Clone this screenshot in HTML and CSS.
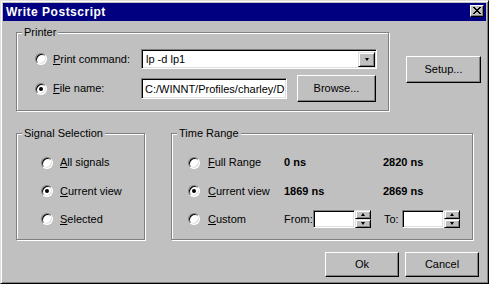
FILE: index.html
```html
<!DOCTYPE html>
<html>
<head>
<meta charset="utf-8">
<title>Write Postscript</title>
<link rel="stylesheet" href="styles.css">
</head>
<body>
<div class="window">
  <div class="titlebar">
    <span class="title">Write Postscript</span>
    <span class="close">
      <svg width="8" height="7" viewBox="0 0 8 7" shape-rendering="crispEdges"><path d="M0 0h2v1h1v1h2v-1h1v-1h2v1h-1v1h-1v1h-1v1h1v1h1v1h1v1h-2v-1h-1v-1h-2v1h-1v1h-2v-1h1v-1h1v-1h1v-1h-1v-1h-1v-1h-1z" fill="#000"/></svg>
    </span>
  </div>
  <div class="content">
    <div class="toprow">
      <div class="group printer">
        <div class="legend">Printer</div>
        <div class="prow r1">
          <span class="radio"></span>
          <span class="plabel"><u>P</u>rint command:</span>
          <div class="combo">
            <span class="ctext">lp -d lp1</span>
            <span class="dropbtn"><i class="tri-down"></i></span>
          </div>
        </div>
        <div class="prow r2">
          <span class="radio on"></span>
          <span class="plabel"><u>F</u>ile name:</span>
          <div class="field file">C:/WINNT/Profiles/charley/D</div>
          <button class="btn browse">Browse...</button>
        </div>
      </div>
      <button class="btn setup">Setup...</button>
    </div>

    <div class="midrow">
      <div class="group signal">
        <div class="legend">Signal Selection</div>
        <div class="srow first"><span class="radio"></span><span class="slabel"><u>A</u>ll signals</span></div>
        <div class="srow"><span class="radio on"></span><span class="slabel"><u>C</u>urrent view</span></div>
        <div class="srow"><span class="radio"></span><span class="slabel"><u>S</u>elected</span></div>
      </div>
      <div class="group timerange">
        <div class="legend">Time Range</div>
        <div class="trow first">
          <span class="radio"></span><span class="tlabel"><u>F</u>ull Range</span>
          <span class="val">0 ns</span><span class="val">2820 ns</span>
        </div>
        <div class="trow">
          <span class="radio on"></span><span class="tlabel"><u>C</u>urrent view</span>
          <span class="val">1869 ns</span><span class="val">2869 ns</span>
        </div>
        <div class="trow">
          <span class="radio"></span><span class="tlabel"><u>C</u>ustom</span>
          <span class="from">From:</span>
          <div class="field spinfield"></div>
          <div class="spin"><span class="sbtn"><i class="tri-up"></i></span><span class="sbtn"><i class="tri-dn"></i></span></div>
          <span class="to">To:</span>
          <div class="field spinfield"></div>
          <div class="spin"><span class="sbtn"><i class="tri-up"></i></span><span class="sbtn"><i class="tri-dn"></i></span></div>
        </div>
      </div>
    </div>

    <div class="botrow">
      <button class="btn ok">Ok</button>
      <button class="btn cancel">Cancel</button>
    </div>
  </div>
</div>
</body>
</html>
```
FILE: styles.css
```css
* { box-sizing: border-box; }
html, body { margin: 0; padding: 0; background: #c0c0c0; }
body {
  font-family: "Liberation Sans", Arial, sans-serif;
  font-size: 11px;
  line-height: 13px;
  color: #000;
}
.window {
  width: 489px;
  height: 284px;
  background: #c0c0c0;
  border: 1px solid;
  border-color: #dfdfdf #000 #000 #dfdfdf;
  box-shadow: inset 1px 1px 0 #fff, inset -1px -1px 0 #808080;
  padding: 2px;
  display: flex;
  flex-direction: column;
}
.titlebar {
  height: 18px;
  background: #000080;
  display: flex;
  align-items: flex-start;
  justify-content: space-between;
  flex: none;
}
.title {
  color: #fff;
  font-weight: bold;
  font-size: 12px;
  letter-spacing: 0.5px;
  line-height: 18px;
  padding-left: 3px;
}
.close {
  width: 14px;
  height: 12px;
  margin: 2px 2px 0 0;
  background: #c0c0c0;
  border: 1px solid;
  border-color: #fff #000 #000 #fff;
  box-shadow: inset -1px -1px 0 #808080;
  display: flex;
  align-items: center;
  justify-content: center;
  padding-bottom: 1px;
}
.close svg { display: block; }

.content {
  flex: 1;
  display: flex;
  flex-direction: column;
  padding: 11px 0 0 13px;
}

/* group boxes */
.group {
  border: 1px solid #808080;
  box-shadow: 1px 1px 0 #fff, inset 1px 1px 0 #fff;
  flex: none;
}
.legend {
  width: fit-content;
  height: 13px;
  margin: -7px 0 0 5px;
  padding: 0 2px 0 2px;
  background: #c0c0c0;
  white-space: nowrap;
}

/* radio */
.radio {
  flex: none;
  position: relative;
  width: 12px;
  height: 12px;
  border-radius: 50%;
  border: 1px solid;
  border-color: #808080 #fff #fff #808080;
  background: #fff;
  box-shadow: inset 1px 1px 0 #000, inset -1px -1px 0 #dfdfdf;
}
.radio.on::after {
  content: "";
  position: absolute;
  left: 3px;
  top: 3px;
  width: 4px;
  height: 4px;
  border-radius: 50%;
  background: #000;
}

/* buttons */
.btn {
  font: inherit;
  color: #000;
  background: #c0c0c0;
  border: 1px solid;
  border-color: #fff #000 #000 #fff;
  box-shadow: inset -1px -1px 0 #808080;
  padding: 0;
  margin: 0;
  text-align: center;
  flex: none;
}

/* sunken fields */
.field {
  background: #fff;
  border: 1px solid;
  border-color: #808080 #fff #fff #808080;
  box-shadow: inset 1px 1px 0 #000, inset -1px -1px 0 #dfdfdf;
  flex: none;
}

/* top row */
.toprow { display: flex; align-items: flex-start; }
.printer { width: 373px; height: 79px; }
.prow { display: flex; align-items: center; padding-left: 18px; }
.prow.r1 { height: 20px; margin-top: 10px; }
.prow.r2 { height: 27px; margin-top: 6px; }
.plabel { width: 88px; margin-left: 6px; flex: none; }
.combo {
  width: 236px;
  height: 20px;
  display: flex;
  align-items: stretch;
  background: #fff;
  border: 1px solid;
  border-color: #808080 #fff #fff #808080;
  box-shadow: inset 1px 1px 0 #000, inset -1px -1px 0 #dfdfdf;
  padding: 2px 1px 1px 2px;
}
.ctext { flex: 1; padding-left: 2px; line-height: 15px; }
.dropbtn {
  width: 17px;
  background: #c0c0c0;
  border: 1px solid;
  border-color: #dfdfdf #000 #000 #dfdfdf;
  box-shadow: inset 1px 1px 0 #fff, inset -1px -1px 0 #808080;
  display: flex;
  align-items: center;
  justify-content: center;
}
.tri-down {
  display: block;
  width: 1px;
  height: 0;
  border-left: 2px solid transparent;
  border-right: 2px solid transparent;
  border-top: 3px solid #000;
}
.field.file {
  width: 146px;
  height: 21px;
  padding: 0 2px 0 3px;
  line-height: 21px;
  white-space: nowrap;
  overflow: hidden;
}
.btn.browse { width: 79px; height: 27px; margin-left: 10px; }
.btn.setup { width: 75px; height: 27px; margin: 24px 0 0 17px; }

/* middle row */
.midrow { display: flex; align-items: flex-start; margin-top: 22px; }
.signal { width: 129px; height: 107px; }
.timerange { width: 302px; height: 107px; margin-left: 26px; }
.srow, .trow { height: 28px; display: flex; align-items: center; }
.srow.first, .trow.first { height: 29px; margin-top: 8px; }
.srow { padding-left: 24px; }
.slabel { margin-left: 7px; }
.trow { padding-left: 16px; }
.tlabel { width: 84px; padding-left: 8px; flex: none; }
.val { font-weight: bold; width: 99px; flex: none; }
.from { width: 29px; flex: none; }
.to { width: 18px; margin-left: 13px; flex: none; }
.field.spinfield { width: 42px; height: 18px; }
.spin { width: 16px; height: 18px; display: flex; flex-direction: column; flex: none; }
.sbtn {
  height: 9px;
  background: #c0c0c0;
  border: 1px solid;
  border-color: #dfdfdf #000 #000 #dfdfdf;
  box-shadow: inset 1px 1px 0 #fff, inset -1px -1px 0 #808080;
  display: flex;
  align-items: center;
  justify-content: center;
}
.tri-up {
  display: block;
  width: 1px;
  height: 0;
  border-left: 2px solid transparent;
  border-right: 2px solid transparent;
  border-bottom: 3px solid #000;
}
.tri-dn {
  display: block;
  width: 1px;
  height: 0;
  border-left: 2px solid transparent;
  border-right: 2px solid transparent;
  border-top: 3px solid #000;
}

/* bottom row */
.botrow { display: flex; justify-content: flex-end; gap: 6px; margin: 12px 7px 0 0; }
.btn.ok, .btn.cancel { width: 74px; height: 25px; }
```
